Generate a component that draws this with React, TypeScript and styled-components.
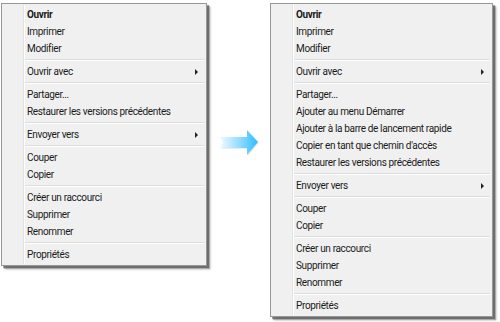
import React from "react";
import styled, { createGlobalStyle } from "styled-components";

const Global = createGlobalStyle`
  html, body { margin: 0; padding: 0; background: #ffffff; }
  body { width: 500px; height: 322px; overflow: hidden; }
`;

const Page = styled.div`
  display: flex;
  align-items: flex-start;
  padding: 3px 0 0 1px;
  font-family: Roboto, "Noto Sans", sans-serif;
`;

const Menu = styled.div<{ $width: number }>`
  position: relative;
  width: ${(p) => p.$width}px;
  box-sizing: border-box;
  background: #f0f0f0;
  border: 1px solid #979797;
  box-shadow: 2px 2px 0 rgba(0, 0, 0, 0.35), 3px 3px 1px rgba(0, 0, 0, 0.25), 4px 4px 2px rgba(0, 0, 0, 0.12);
  padding: 2px 2px 2px 0;
  display: flex;
  flex-direction: column;
`;

const Gutter = styled.div`
  position: absolute;
  top: 1px;
  bottom: 1px;
  left: 21px;
  width: 1px;
  background: #e2e3e3;
  border-right: 1px solid #ffffff;
`;

const Item = styled.div<{ $bold?: boolean }>`
  position: relative;
  height: 17px;
  display: flex;
  align-items: center;
  padding-left: 25px;
  font-size: 10px;
  letter-spacing: -0.35px;
  color: #1b1b1b;
  font-weight: ${(p) => (p.$bold ? 700 : 400)};
  white-space: nowrap;
`;

const Arrow = styled.span`
  position: absolute;
  right: 6px;
  top: 6px;
  width: 0;
  height: 0;
  border-top: 3px solid transparent;
  border-bottom: 3px solid transparent;
  border-left: 3px solid #202020;
`;

const Separator = styled.div`
  height: 6px;
  display: flex;
  align-items: center;
  padding-left: 23px;
  &::after {
    content: "";
    flex: 1;
    height: 1px;
    background: #dcdcdc;
    border-bottom: 1px solid #ffffff;
  }
`;

const ArrowBox = styled.div`
  width: 63px;
  display: flex;
  justify-content: center;
  margin-top: 125px;
`;

type Entry = { label?: string; bold?: boolean; sub?: boolean; sep?: boolean };

const leftItems: Entry[] = [
  { label: "Ouvrir", bold: true },
  { label: "Imprimer" },
  { label: "Modifier" },
  { sep: true },
  { label: "Ouvrir avec", sub: true },
  { sep: true },
  { label: "Partager..." },
  { label: "Restaurer les versions précédentes" },
  { sep: true },
  { label: "Envoyer vers", sub: true },
  { sep: true },
  { label: "Couper" },
  { label: "Copier" },
  { sep: true },
  { label: "Créer un raccourci" },
  { label: "Supprimer" },
  { label: "Renommer" },
  { sep: true },
  { label: "Propriétés" },
];

const rightItems: Entry[] = [
  { label: "Ouvrir", bold: true },
  { label: "Imprimer" },
  { label: "Modifier" },
  { sep: true },
  { label: "Ouvrir avec", sub: true },
  { sep: true },
  { label: "Partager..." },
  { label: "Ajouter au menu Démarrer" },
  { label: "Ajouter à la barre de lancement rapide" },
  { label: "Copier en tant que chemin d'accès" },
  { label: "Restaurer les versions précédentes" },
  { sep: true },
  { label: "Envoyer vers", sub: true },
  { sep: true },
  { label: "Couper" },
  { label: "Copier" },
  { sep: true },
  { label: "Créer un raccourci" },
  { label: "Supprimer" },
  { label: "Renommer" },
  { sep: true },
  { label: "Propriétés" },
];

function ContextMenu({ items, width }: { items: Entry[]; width: number }) {
  return (
    <Menu $width={width}>
      <Gutter />
      {items.map((it, i) =>
        it.sep ? (
          <Separator key={i} />
        ) : (
          <Item key={i} $bold={it.bold}>
            {it.label}
            {it.sub && <Arrow />}
          </Item>
        )
      )}
    </Menu>
  );
}

function BlueArrow() {
  return (
    <svg width="42" height="30" viewBox="0 0 42 30">
      <defs>
        <linearGradient id="ag" x1="0" y1="0" x2="1" y2="0">
          <stop offset="0" stopColor="#eefaff" />
          <stop offset="0.45" stopColor="#9fe0ff" />
          <stop offset="1" stopColor="#2cbcff" />
        </linearGradient>
      </defs>
      <path d="M2 9 L29 9 L29 2 L40 14 L29 27 L29 20 L2 20 L5 14.5 Z" fill="rgba(0,0,0,0.08)" transform="translate(1,1)" />
      <path d="M2 9 L29 9 L29 2 L40 14 L29 27 L29 20 L2 20 L5 14.5 Z" fill="url(#ag)" />
    </svg>
  );
}

export default function App() {
  return (
    <>
      <Global />
      <Page>
        <ContextMenu items={leftItems} width={206} />
        <ArrowBox>
          <BlueArrow />
        </ArrowBox>
        <ContextMenu items={rightItems} width={223} />
      </Page>
    </>
  );
}
